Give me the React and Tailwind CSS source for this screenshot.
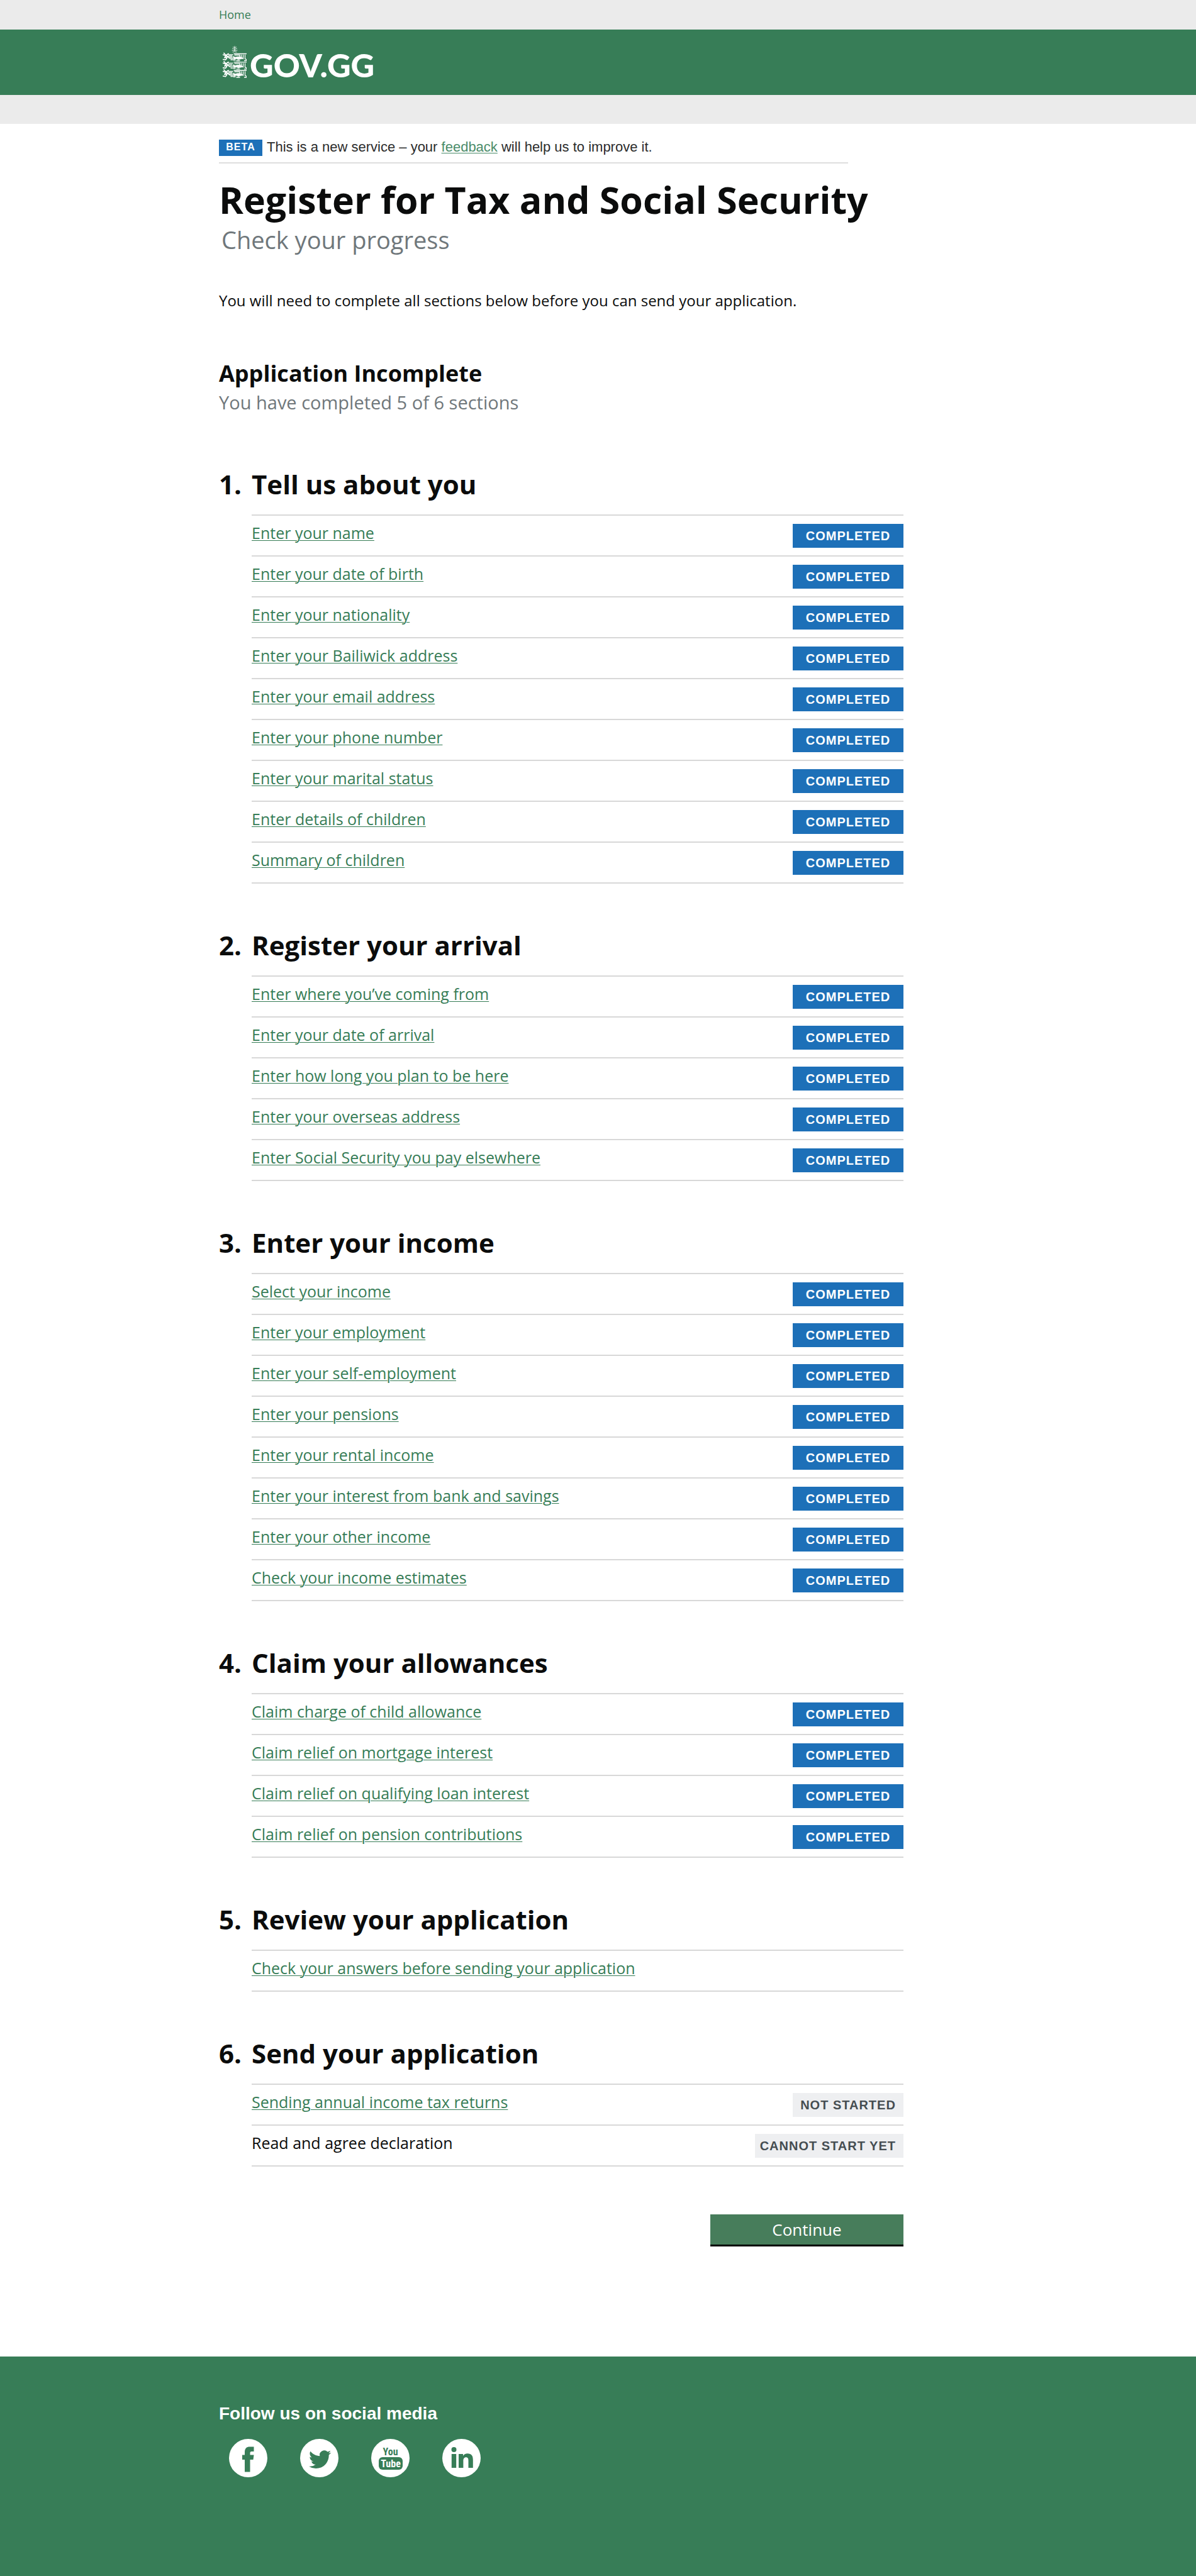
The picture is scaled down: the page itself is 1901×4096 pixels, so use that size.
import React from "react";

const sections = [
  {
    title: "Tell us about you",
    tasks: [
      "Enter your name",
      "Enter your date of birth",
      "Enter your nationality",
      "Enter your Bailiwick address",
      "Enter your email address",
      "Enter your phone number",
      "Enter your marital status",
      "Enter details of children",
      "Summary of children",
    ].map((label) => ({ label, status: "completed" })),
  },
  {
    title: "Register your arrival",
    tasks: [
      "Enter where you’ve coming from",
      "Enter your date of arrival",
      "Enter how long you plan to be here",
      "Enter your overseas address",
      "Enter Social Security you pay elsewhere",
    ].map((label) => ({ label, status: "completed" })),
  },
  {
    title: "Enter your income",
    tasks: [
      "Select your income",
      "Enter your employment",
      "Enter your self-employment",
      "Enter your pensions",
      "Enter your rental income",
      "Enter your interest from bank and savings",
      "Enter your other income",
      "Check your income estimates",
    ].map((label) => ({ label, status: "completed" })),
  },
  {
    title: "Claim your allowances",
    tasks: [
      "Claim charge of child allowance",
      "Claim relief on mortgage interest",
      "Claim relief on qualifying loan interest",
      "Claim relief on pension contributions",
    ].map((label) => ({ label, status: "completed" })),
  },
  {
    title: "Review your application",
    tasks: [{ label: "Check your answers before sending your application" }],
  },
  {
    title: "Send your application",
    tasks: [
      { label: "Sending annual income tax returns", status: "notStarted" },
      { label: "Read and agree declaration", status: "blocked" },
    ],
  },
];

const tags = {
  completed: { text: "COMPLETED", style: "w-[176px] justify-center bg-[#1d70b8] text-white" },
  notStarted: { text: "NOT STARTED", style: "w-[176px] justify-center bg-[#eeeff1] text-[#454d51]" },
  blocked: { text: "CANNOT START YET", style: "justify-end bg-[#eeeff1] pl-2 pr-3 text-[#454d51]" },
};

function Tag({ status }) {
  const tag = tags[status];
  return (
    <strong
      className={`mt-[13px] flex h-[38px] shrink-0 items-center whitespace-nowrap font-['Liberation_Sans',sans-serif] text-[20px] leading-6 font-bold tracking-[1px] ${tag.style}`}
    >
      {tag.text}
    </strong>
  );
}

function Lion() {
  return (
    <g>
      <path d="M2 0 L5 3.5 L9 1 M0.5 2.5 L5 4 M5 4 L3 7.5 M6 4 L11 8 M0.5 10 L4.5 10.5 L6.5 8 M9 5 L5 7" strokeWidth="1.7" />
      <path d="M9 2.5 H16 M10 4.5 H15.5 M11 6.5 H15 M12 8.5 H16 M13 10.5 H16" strokeWidth="1.3" strokeDasharray="1.8 1" />
      <path d="M18 1 H37.5 M19 3 H27 V6 M29.5 3 V7 M32.5 3 V9 M35.5 3 V9 L37.5 10 V12 H34.5 M17 11 H20 M22 12 H27" strokeWidth="1.3" />
      <path d="M16.5 5 L20 6.5 Q24 4.5 30 6.5 L33 8.5 L28 9.5 L25 10.5 L22 9 L17.5 10 Z" fill="white" strokeWidth="0.5" />
    </g>
  );
}

function Crest() {
  return (
    <svg viewBox="0 0 38 51" className="h-[51px] w-[38px]" fill="none" stroke="white" strokeLinecap="round" aria-hidden="true">
      <path d="M19 0 V9 M19 3 L16.5 1.8 M19 3 L21.5 1.8 M19 5.5 L15.5 4 M19 5.5 L22.5 4 M19 7.5 L15 7 M19 7.5 L23 7 M18 9.5 L16 9.8 M20 9.5 L22 9.8" strokeWidth="0.8" />
      <g transform="translate(0 11.5)"><Lion /></g>
      <g transform="translate(0 24.8)"><Lion /></g>
      <g transform="translate(0 38)"><Lion /></g>
    </svg>
  );
}

function SocialLink({ label, children }) {
  return (
    <a href="#" aria-label={label} className="block size-[61px]">
      <svg viewBox="0 0 61 61" className="size-full" aria-hidden="true">
        <circle cx="30.5" cy="30.5" r="30.5" fill="white" />
        {children}
      </svg>
    </a>
  );
}

export default function App() {
  return (
    <div className="flex min-h-screen flex-col bg-white font-['Open_Sans',sans-serif] text-[#0b0c0c]">
      <nav className="h-[47px] bg-[#ebebeb]">
        <div className="mx-auto flex h-full max-w-[1205px] items-center pb-[2px]">
          <a href="#" className="text-[18px] leading-6 text-[#377d57]">Home</a>
        </div>
      </nav>
      <header className="h-[104px] bg-[#377d57]">
        <div className="mx-auto max-w-[1205px]">
          <a href="#" aria-label="GOV.GG" className="flex gap-[5px] pt-[26px] pl-[6px] text-white">
            <Crest />
            <span className="font-['Lato',sans-serif] text-[52px] leading-[60px] font-black">GOV.GG</span>
          </a>
        </div>
      </header>
      <div className="h-[46px] bg-[#ebebeb]" />

      <main className="mx-auto w-full max-w-[1205px] pt-[25px] pb-[175px]">
        <div className="flex max-w-[1000px] items-start gap-[7px] border-b-2 border-[#dedede] pb-[10px]">
          <strong className="flex h-[26px] w-[69px] items-center justify-center bg-[#1d70b8] pb-[2px] font-['Liberation_Sans',sans-serif] text-[16px] leading-5 font-bold tracking-[1px] text-white">
            BETA
          </strong>
          <p className="font-['Liberation_Sans',sans-serif] text-[22px] leading-[24px] text-[#2b2c2c]">
            This is a new service – your{" "}
            <a href="#" className="text-[#4a8c69] underline decoration-1 underline-offset-2">feedback</a>{" "}
            will help us to improve it.
          </p>
        </div>

        <h1 className="mt-[17px] text-[59px] leading-[80px] font-bold">Register for Tax and Social Security</h1>
        <p className="pl-1 text-[38px] leading-[48px] text-[#6f777b]">Check your progress</p>
        <p className="mt-[57px] text-[24px] leading-8">
          You will need to complete all sections below before you can send your application.
        </p>

        <h2 className="mt-[76px] text-[36px] leading-[48px] font-bold">Application Incomplete</h2>
        <p className="mt-[2px] text-[29px] leading-10 text-[#6f777b]">You have completed 5 of 6 sections</p>

        <ol className="mt-[82px] flex max-w-[1088px] flex-col gap-[70px]">
          {sections.map((section, index) => (
            <li key={section.title}>
              <h2 className="flex h-[76px] text-[42px] leading-[56px] font-bold">
                <span className="w-[52px]">{index + 1}.</span>
                {section.title}
              </h2>
              <ul className="ml-[52px] border-t-2 border-[#d8d8d8]">
                {section.tasks.map((task) => (
                  <li key={task.label} className="flex h-[65px] justify-between border-b-2 border-[#d8d8d8]">
                    {task.status === "blocked" ? (
                      <span className="pt-[11px] text-[25px] leading-8">{task.label}</span>
                    ) : (
                      <a href="#" className="pt-[11px] text-[25px] leading-8 text-[#377d57] underline decoration-1 underline-offset-2">
                        {task.label}
                      </a>
                    )}
                    {task.status && <Tag status={task.status} />}
                  </li>
                ))}
              </ul>
            </li>
          ))}
        </ol>

        <div className="mt-[76px] flex max-w-[1088px] justify-end">
          <button type="button" className="h-[51px] w-[307px] border-b-[3px] border-black bg-[#477d5b] text-[26px] leading-8 text-white">
            Continue
          </button>
        </div>
      </main>

      <footer className="grow bg-[#377d57] pt-[75px]">
        <div className="mx-auto max-w-[1205px]">
          <h2 className="font-['Liberation_Sans',sans-serif] text-[28px] leading-8 font-bold text-white">Follow us on social media</h2>
          <div className="mt-6 flex gap-[52px] pl-4">
            <SocialLink label="Facebook">
              <path fill="#377d57" d="M25 52.5 V33 H21 V25.5 H25 V21 C25 15 28 12.5 33 12.5 H39.5 V20 H36 C34 20 33.5 21 33.5 22.5 V25.5 H39.5 L38.5 33 H33.5 V52.5 Z" />
            </SocialLink>
            <SocialLink label="Twitter">
              <path fill="#377d57" transform="translate(14 15) scale(1.47)" d="M23.953 4.57a10 10 0 01-2.825.775 4.958 4.958 0 002.163-2.723c-.951.555-2.005.959-3.127 1.184a4.92 4.92 0 00-8.384 4.482C7.69 8.095 4.067 6.13 1.64 3.162a4.822 4.822 0 00-.666 2.475c0 1.71.87 3.213 2.188 4.096a4.904 4.904 0 01-2.228-.616v.06a4.923 4.923 0 003.946 4.827 4.996 4.996 0 01-2.212.085 4.936 4.936 0 004.604 3.417 9.867 9.867 0 01-6.102 2.105c-.39 0-.779-.023-1.17-.067a13.995 13.995 0 007.557 2.209c9.053 0 13.998-7.496 13.998-13.985 0-.21 0-.42-.015-.63A9.935 9.935 0 0024 4.59z" />
            </SocialLink>
            <SocialLink label="YouTube">
              <rect x="12" y="29" width="38" height="20" rx="6" fill="#377d57" />
              <text x="30.5" y="26" textAnchor="middle" fill="#377d57" fontFamily="'Liberation Sans Narrow', 'Roboto Condensed', Roboto, sans-serif" fontWeight="700" fontSize="16">You</text>
              <text x="31" y="45" textAnchor="middle" fill="white" fontFamily="'Liberation Sans Narrow', 'Roboto Condensed', Roboto, sans-serif" fontWeight="700" fontSize="16">Tube</text>
            </SocialLink>
            <SocialLink label="LinkedIn">
              <circle cx="18.5" cy="17" r="4" fill="#377d57" />
              <path fill="#377d57" d="M14.8 24 H22.2 V46 H14.8 Z M26 24 H33 V27 C34.5 24.5 37 23.3 40 23.3 C46.5 23.3 48.8 27 48.8 33.5 V46 H41.5 V35 C41.5 31.5 40.8 29.3 37.8 29.3 C34.5 29.3 33.4 31.8 33.4 35 V46 H26 Z" />
            </SocialLink>
          </div>
        </div>
      </footer>
    </div>
  );
}
